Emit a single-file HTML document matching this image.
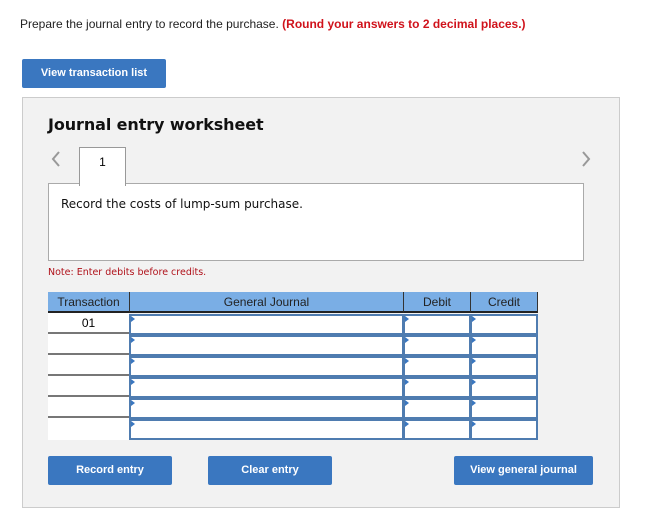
<!DOCTYPE html>
<html><head><style>
body{margin:0;width:650px;height:526px;background:#fff;font-family:"Liberation Sans",Arial,sans-serif;position:relative;overflow:hidden}
.a{position:absolute}
.btn{position:absolute;background:#3a77c0;color:#fff;font-weight:bold;font-size:11px;text-align:center;border-radius:2px}
.hd{position:absolute;top:292px;height:21px;background:#7aaee5;border-right:1px solid #333;border-bottom:2px solid #222;font-size:12px;line-height:21px;text-align:center;color:#222;box-sizing:border-box}
.inp{position:absolute;border:2px solid #4f7cb0;background:#fff;box-sizing:border-box;height:21px}
.inp:before{content:"";position:absolute;left:0;top:0;border-left:4px solid #3a77c0;border-top:3px solid transparent;border-bottom:3px solid transparent}
.tr{position:absolute;left:48px;width:81px;height:21px;background:#fff;border-bottom:2px solid #777;box-sizing:border-box;font-size:12px;text-align:center;line-height:20px}
</style></head><body>
<div class="a" style="left:20px;top:17px;font-size:12px;color:#222">Prepare the journal entry to record the purchase. <b style="color:#d0121b">(Round your answers to 2 decimal places.)</b></div>
<div class="btn" style="left:22px;top:59px;width:144px;height:29px;line-height:29px">View transaction list</div>
<div class="a" style="left:22px;top:97px;width:596px;height:409px;background:#f2f2f2;border:1px solid #ccc"></div>
<div class="a" style="left:48px;top:115px;font-family:'DejaVu Sans',sans-serif;font-weight:bold;font-size:16px;color:#111;letter-spacing:-0.1px">Journal entry worksheet</div>
<svg class="a" style="left:50px;top:151px" width="12" height="16"><path d="M9 1 L3 8 L9 15" stroke="#999" stroke-width="2" fill="none"/></svg>
<svg class="a" style="left:580px;top:151px" width="12" height="16"><path d="M3 1 L9 8 L3 15" stroke="#999" stroke-width="2" fill="none"/></svg>
<div class="a" style="left:48px;top:183px;width:534px;height:76px;background:#fff;border:1px solid #aaa"></div>
<div class="a" style="left:79px;top:147px;width:45px;height:38px;background:#fff;border:1px solid #999;border-bottom:none;text-align:center;font-size:12px;line-height:28px">1</div>
<div class="a" style="left:61px;top:197px;font-family:'DejaVu Sans',sans-serif;font-size:12px;color:#111">Record the costs of lump-sum purchase.</div>
<div class="a" style="left:48px;top:267px;font-family:'DejaVu Sans',sans-serif;font-size:9.5px;color:#b0121b">Note: Enter debits before credits.</div>
<div class="hd" style="left:48px;width:82px">Transaction</div>
<div class="hd" style="left:130px;width:274px">General Journal</div>
<div class="hd" style="left:404px;width:67px">Debit</div>
<div class="hd" style="left:471px;width:67px">Credit</div>
<div class="tr" style="top:313px">01</div>
<div class="tr" style="top:334px"></div>
<div class="tr" style="top:355px"></div>
<div class="tr" style="top:376px"></div>
<div class="tr" style="top:397px"></div>
<div class="tr" style="top:418px;border-bottom:none;height:22px"></div>
<div class="inp" style="left:129px;top:314px;width:275px"></div><div class="inp" style="left:403px;top:314px;width:68px"></div><div class="inp" style="left:470px;top:314px;width:68px"></div>
<div class="inp" style="left:129px;top:335px;width:275px"></div><div class="inp" style="left:403px;top:335px;width:68px"></div><div class="inp" style="left:470px;top:335px;width:68px"></div>
<div class="inp" style="left:129px;top:356px;width:275px"></div><div class="inp" style="left:403px;top:356px;width:68px"></div><div class="inp" style="left:470px;top:356px;width:68px"></div>
<div class="inp" style="left:129px;top:377px;width:275px"></div><div class="inp" style="left:403px;top:377px;width:68px"></div><div class="inp" style="left:470px;top:377px;width:68px"></div>
<div class="inp" style="left:129px;top:398px;width:275px"></div><div class="inp" style="left:403px;top:398px;width:68px"></div><div class="inp" style="left:470px;top:398px;width:68px"></div>
<div class="inp" style="left:129px;top:419px;width:275px"></div><div class="inp" style="left:403px;top:419px;width:68px"></div><div class="inp" style="left:470px;top:419px;width:68px"></div>
<div class="btn" style="left:48px;top:456px;width:124px;height:29px;line-height:29px">Record entry</div>
<div class="btn" style="left:208px;top:456px;width:124px;height:29px;line-height:29px">Clear entry</div>
<div class="btn" style="left:454px;top:456px;width:139px;height:29px;line-height:29px">View general journal</div>
</body></html>
